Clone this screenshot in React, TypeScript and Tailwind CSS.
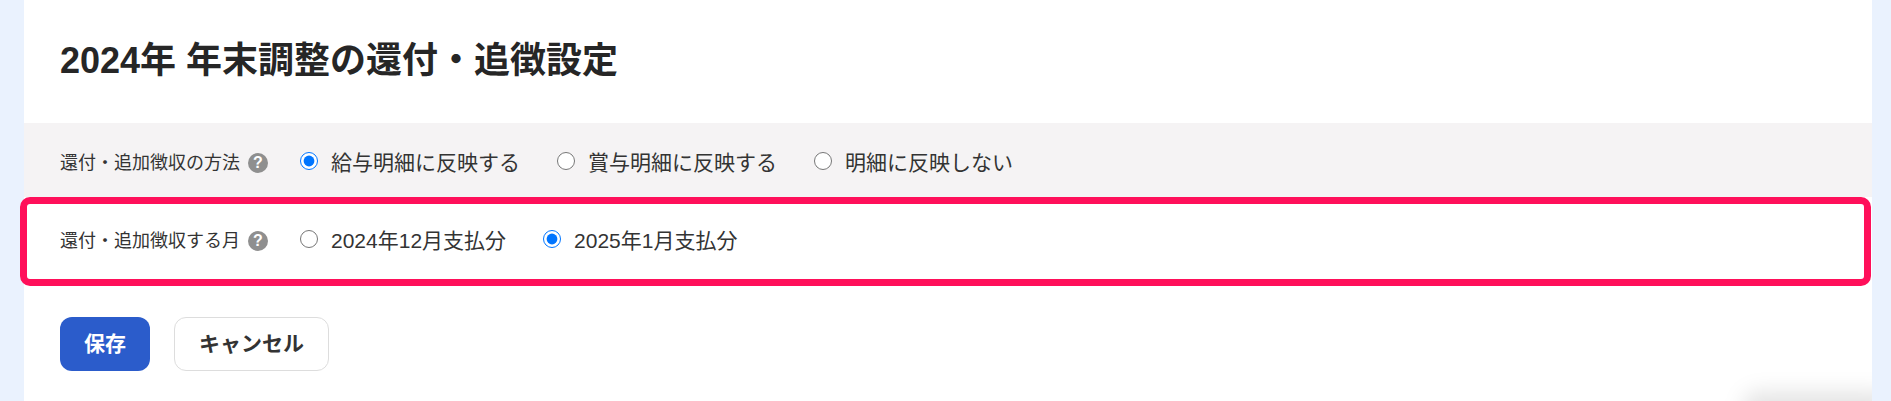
import React from "react";

const FONT = "font-['Liberation_Sans','Noto_Sans_CJK_JP',sans-serif]";

function Help() {
  return (
    <span className="ml-[8px] flex h-[20px] w-[20px] shrink-0 items-center justify-center rounded-full bg-[#8f8f8f] text-[16px] font-bold leading-none text-white">
      ?
    </span>
  );
}

function Radio({ label, checked, name }: { label: string; checked?: boolean; name: string }) {
  return (
    <label className="mr-[37px] flex items-center text-[21px] leading-[30px] text-[#333333]">
      <input type="radio" name={name} defaultChecked={checked} className="m-0 mr-[13px] h-[18px] w-[18px] -translate-y-[2px]" />
      <span>{label}</span>
    </label>
  );
}

function Label({ text }: { text: string }) {
  return (
    <div className="flex w-[240px] shrink-0 items-center text-[18px] leading-[26px] text-[#333333]">
      <span>{text}</span>
      <Help />
    </div>
  );
}

export default function App() {
  return (
    <div className={`${FONT} relative h-[401px] w-full overflow-hidden bg-[#eaf2fe] pl-[24px] pr-[19px]`}>
      <div className="h-full bg-white">
        <div className="flex h-[123px] items-center pl-[36px] pb-[2px]">
          <h1 className="text-[36px] font-bold leading-[54px] text-[#262626]">2024年 年末調整の還付・追徴設定</h1>
        </div>
        <div className="flex h-[74px] items-center bg-[#f5f3f4] pl-[36px] pt-[5px]">
          <Label text="還付・追加徴収の方法" />
          <Radio name="a" label="給与明細に反映する" checked />
          <Radio name="a" label="賞与明細に反映する" />
          <Radio name="a" label="明細に反映しない" />
        </div>
        <div className="-ml-[4px] mr-[1px] flex h-[89px] items-center rounded-[10px] border-[7px] border-[#ff0f5a] bg-white pb-[2px] pl-[33px]">
          <Label text="還付・追加徴収する月" />
          <Radio name="b" label="2024年12月支払分" />
          <Radio name="b" label="2025年1月支払分" checked />
        </div>
        <div className="mt-[31px] flex gap-[24px] pl-[36px]">
          <button className="h-[54px] w-[90px] rounded-[12px] bg-[#2b5ccb] text-[21px] font-bold text-white">保存</button>
          <button className="h-[54px] w-[155px] rounded-[12px] border border-[#dddddd] bg-white text-[21px] font-bold text-[#333333]">キャンセル</button>
        </div>
      </div>
      <div className="absolute bottom-0 right-[19px] h-[40px] w-[170px] overflow-hidden">
        <div className="absolute -bottom-[26px] -right-[20px] h-[36px] w-[150px] rounded-full bg-black/10 blur-[10px]" />
      </div>
    </div>
  );
}
